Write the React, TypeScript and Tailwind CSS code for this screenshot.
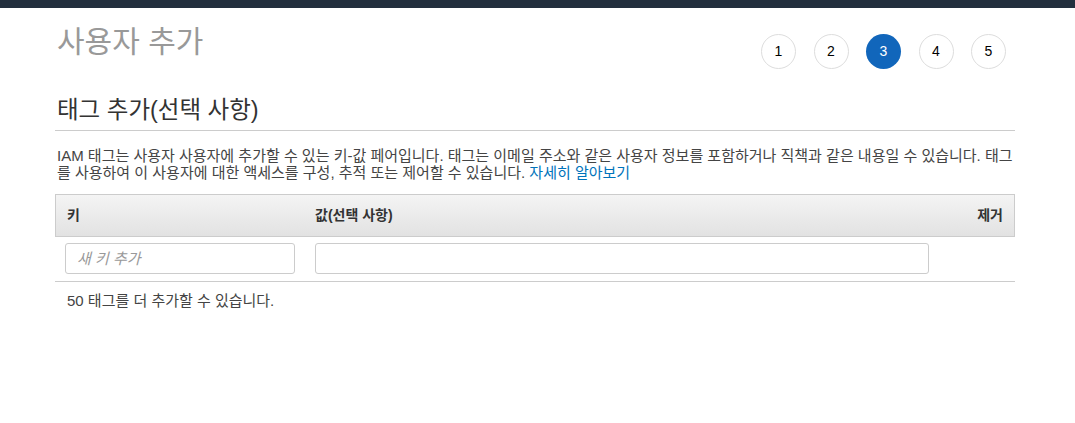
import React from "react";

const font = { fontFamily: '"Liberation Sans", "Noto Sans CJK KR", sans-serif' };

export default function App() {
  const steps = [1, 2, 3, 4, 5];
  return (
    <div className="w-[1075px] h-[423px] bg-white text-[#444]" style={font}>
      <div className="h-[8px] bg-[#232f3e]" />
      <div className="pl-[55px] pr-[60px]">
        <div className="flex items-start justify-between">
          <h1 className="pl-[2px] pt-[14px] text-[30px] leading-[40px] text-[#999] font-normal">사용자 추가</h1>
          <div className="flex gap-[17.5px] pt-[26px] pr-[9px]">
            {steps.map((s) => (
              <div
                key={s}
                className={
                  s === 3
                    ? "w-[35px] h-[35px] rounded-full bg-[#1166bb] text-white flex items-center justify-center text-[14px]"
                    : "w-[35px] h-[35px] rounded-full border border-[#ddd] text-black flex items-center justify-center text-[14px]"
                }
              >
                {s}
              </div>
            ))}
          </div>
        </div>
        <h2 className="pl-[2px] mt-[27px] text-[23.5px] leading-[28px] font-normal text-[#333]">태그 추가(선택 사항)</h2>
        <div className="mt-[6px] border-t border-[#ccc]" />
        <p className="mt-[16px] pl-[2px] text-[15px] leading-[17px] text-[#444]">
          IAM 태그는 사용자 사용자에 추가할 수 있는 키-값 페어입니다. 태그는 이메일 주소와 같은 사용자 정보를 포함하거나 직책과 같은 내용일 수 있습니다. 태그를 사용하여 이 사용자에 대한 액세스를 구성, 추적 또는 제어할 수 있습니다. <a className="text-[#0073bb]">자세히 알아보기</a>
        </p>
        <div className="mt-[13px]">
          <div className="h-[43px] flex items-center border border-[#ccc] bg-gradient-to-b from-[#f4f4f4] to-[#e2e2e2] text-[14px] font-bold text-[#333]">
            <div className="w-[259px] pl-[11px]">키</div>
            <div className="flex-1">값(선택 사항)</div>
            <div className="pr-[11px]">제거</div>
          </div>
          <div className="flex items-start pt-[6px] pb-[7px] border-b border-[#ccc]">
            <div className="w-[260px] pl-[10px] pr-[20px]">
              <input
                className="w-full h-[31px] border border-[#ccc] rounded-[3px] px-[11px] text-[15px] italic placeholder:text-[#999] outline-none"
                placeholder="새 키 추가"
                style={font}
              />
            </div>
            <div className="w-[614px]">
              <input className="w-full h-[31px] border border-[#ccc] rounded-[3px] outline-none" />
            </div>
          </div>
          <div className="pl-[12px] mt-[9px] text-[15px] leading-[20px] text-[#444]">50 태그를 더 추가할 수 있습니다.</div>
        </div>
      </div>
    </div>
  );
}
